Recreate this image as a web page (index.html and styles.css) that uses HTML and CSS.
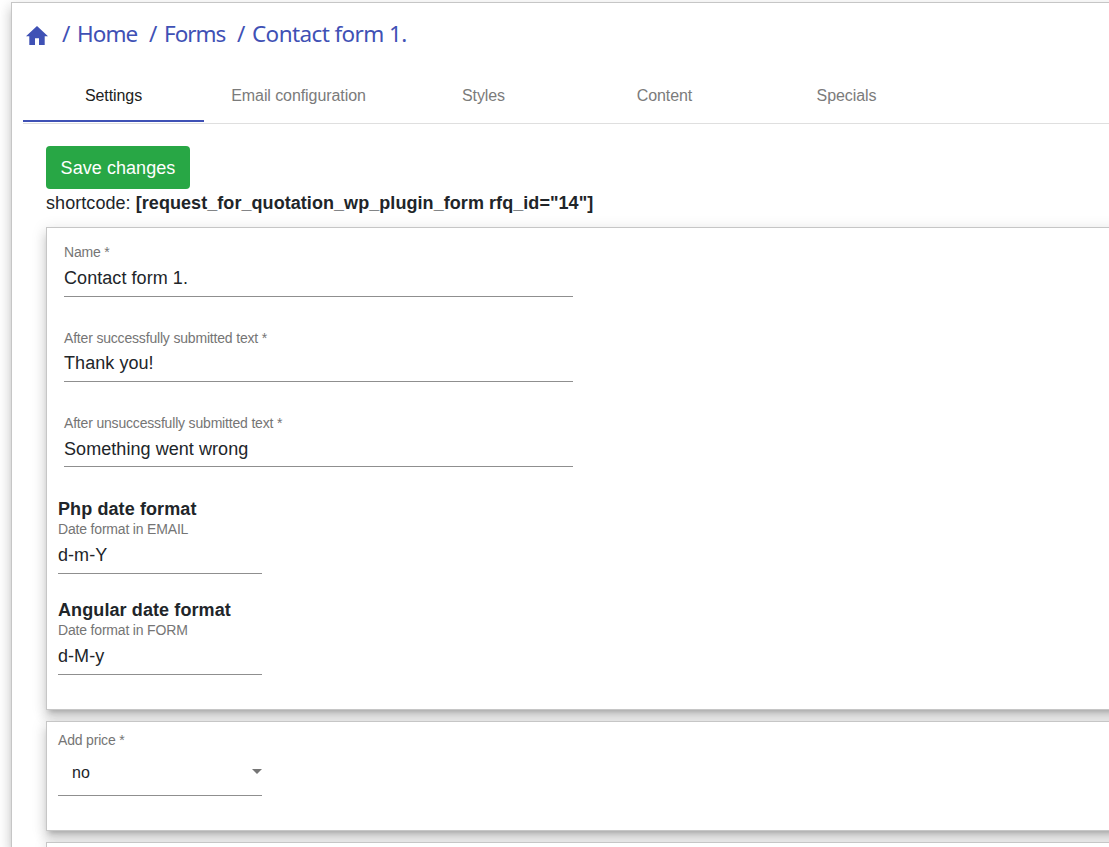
FILE: index.html
```
<!DOCTYPE html>
<html lang="en">
<head>
<meta charset="utf-8">
<title>Contact form 1.</title>
<link rel="stylesheet" href="styles.css">
</head>
<body>
<main class="panel raised">
  <nav class="crumbs">
    <svg class="home" viewBox="0 0 22 19"><path d="M11 0 22 10.2h-3.3V19H13v-6.7H9V19H3.3v-8.8H0z" fill="currentColor"/></svg>
    <span class="slash">/</span><a class="crumb home-link">Home</a>
    <span class="slash">/</span><a class="crumb forms-link">Forms</a>
    <span class="slash">/</span><a class="crumb form-link">Contact form 1.</a>
  </nav>
  <div class="tabs">
    <div class="tab active"><span>Settings</span></div>
    <div class="tab wide"><span>Email configuration</span></div>
    <div class="tab"><span>Styles</span></div>
    <div class="tab"><span>Content</span></div>
    <div class="tab last"><span>Specials</span></div>
  </div>
  <div class="content">
    <button class="save"><span>Save changes</span></button>
    <div class="shortcode">shortcode: <b>[request_for_quotation_wp_plugin_form rfq_id="14"]</b></div>
    <section class="card general raised">
      <div class="texts">
        <div class="field"><label>Name *</label><div class="value">Contact form 1.</div></div>
        <div class="field"><label>After successfully submitted text *</label><div class="value">Thank you!</div></div>
        <div class="field low"><label>After unsuccessfully submitted text *</label><div class="value">Something went wrong</div></div>
      </div>
      <div class="date"><h3>Php date format</h3><div class="field"><label>Date format in EMAIL</label><div class="value">d-m-Y</div></div></div>
      <div class="date"><h3>Angular date format</h3><div class="field"><label>Date format in FORM</label><div class="value">d-M-y</div></div></div>
    </section>
    <section class="card price raised">
      <div class="field"><label>Add price *</label><div class="select"><span>no</span><i class="arrow"></i></div></div>
    </section>
    <section class="card next raised"></section>
  </div>
</main>
</body>
</html>
```
FILE: styles.css
```
* { box-sizing: border-box; }
html { overflow: hidden; }
body {
  margin: 0;
  height: 847px;
  overflow: hidden;
  background: #fff;
  color: #212529;
  font: 18px/27px "Liberation Sans", Arial, sans-serif;
}
.raised {
  background: #fff;
  border: 1px solid #c6c6c6;
  box-shadow: 0 5px 5px -3px rgba(0,0,0,.2), 0 8px 10px 1px rgba(0,0,0,.12), 0 3px 14px 2px rgba(0,0,0,.09);
}
.panel {
  margin: 2px 0 0 11px;
  width: 1130px;
  height: 845px;
  padding-left: 11px;
  border-bottom: 0;
}
.crumbs {
  display: flex;
  align-items: center;
  height: 64px;
  padding-left: 3px;
  color: #3f51b5;
  font: 22.5px/30px "Noto Sans", sans-serif;
  white-space: nowrap;
}
.home { width: 22px; height: 19px; margin: 0 14px 0 0; }
.slash { width: 15px; padding-bottom: 2px; text-align: left; }
.crumb { padding-bottom: 2px; letter-spacing: -.6px; }
.home-link { width: 72px; letter-spacing: -.9px; }
.forms-link { width: 73px; letter-spacing: -1px; }
.tabs {
  display: flex;
  height: 57px;
  border-bottom: 1px solid #dfdfdf;
  font-size: 16px;
}
.tab {
  display: flex;
  align-items: center;
  justify-content: center;
  width: 181px;
  height: 55px;
  padding-top: 4px;
  color: #7b7b7b;
  letter-spacing: -.08px;
  white-space: nowrap;
  border-bottom: 2px solid transparent;
}
.tab.wide { width: 189px; }
.tab.last { width: 183px; }
.tab.active { color: #212121; border-color: #3f51b5; }
.content { padding: 22px 0 0 23px; }
.save {
  display: block;
  width: 144px;
  height: 43px;
  padding: 1px 0 0;
  border: 0;
  border-radius: 4px;
  background: #28a745;
  color: #fff;
  font: 18px/27px "Liberation Sans", Arial, sans-serif;
  letter-spacing: .06px;
}
.shortcode { height: 38px; line-height: 28px; letter-spacing: .06px; white-space: nowrap; }
.general { height: 483px; padding: 12px 11px; }
.texts { padding-left: 6px; }
.field { width: 204px; border-bottom: 1px solid #8f8f8f; }
.field label { display: block; height: 25px; line-height: 24px; font-size: 14px; letter-spacing: -.18px; color: #757575; white-space: nowrap; }
.value { height: 31px; line-height: 27px; letter-spacing: .06px; }
.texts .field { width: 509px; height: 57px; margin-bottom: 28px; }
.texts .field + .field label { line-height: 26px; }
.texts .low .value { line-height: 29px; }
.texts .field:last-child { margin-bottom: 0; }
.date { padding-top: 29px; height: 107px; }
.date + .date { padding-top: 23px; }
.date h3 { margin: 0; height: 25px; font-size: 18px; line-height: 27px; letter-spacing: .1px; }
.date .field { height: 53px; }
.date .field label { height: 22px; line-height: 17px; }
.date .value { height: 30px; line-height: 25px; }
.price { height: 110px; margin-top: 11px; padding: 6px 11px; }
.select { display: flex; align-items: center; justify-content: space-between; height: 42px; padding: 0 0 3px 14px; font-size: 16px; }
.arrow { border: 5px solid transparent; border-top-color: #757575; border-bottom: 0; margin-bottom: 2px; }
.next { height: 5px; margin-top: 11px; border-bottom: 0; }
```
